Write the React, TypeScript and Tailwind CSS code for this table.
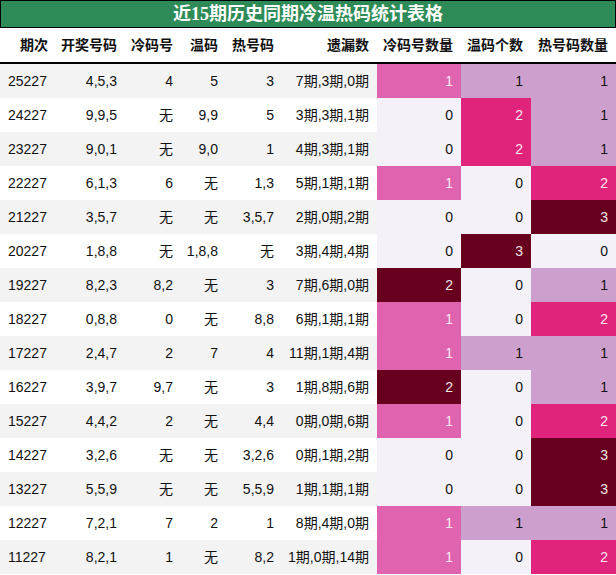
const rows: [string, string, string, string, string, string, number, number, number][] = [
  ['25227', '4,5,3', '4', '5', '3', '7期,3期,0期', 1, 1, 1],
  ['24227', '9,9,5', '无', '9,9', '5', '3期,3期,1期', 0, 2, 1],
  ['23227', '9,0,1', '无', '9,0', '1', '4期,3期,1期', 0, 2, 1],
  ['22227', '6,1,3', '6', '无', '1,3', '5期,1期,1期', 1, 0, 2],
  ['21227', '3,5,7', '无', '无', '3,5,7', '2期,0期,2期', 0, 0, 3],
  ['20227', '1,8,8', '无', '1,8,8', '无', '3期,4期,4期', 0, 3, 0],
  ['19227', '8,2,3', '8,2', '无', '3', '7期,6期,0期', 2, 0, 1],
  ['18227', '0,8,8', '0', '无', '8,8', '6期,1期,1期', 1, 0, 2],
  ['17227', '2,4,7', '2', '7', '4', '11期,1期,4期', 1, 1, 1],
  ['16227', '3,9,7', '9,7', '无', '3', '1期,8期,6期', 2, 0, 1],
  ['15227', '4,4,2', '2', '无', '4,4', '0期,0期,6期', 1, 0, 2],
  ['14227', '3,2,6', '无', '无', '3,2,6', '0期,1期,2期', 0, 0, 3],
  ['13227', '5,5,9', '无', '无', '5,5,9', '1期,1期,1期', 0, 0, 3],
  ['12227', '7,2,1', '7', '2', '1', '8期,4期,0期', 1, 1, 1],
  ['11227', '8,2,1', '1', '无', '8,2', '1期,0期,14期', 1, 0, 2],
]

// 冷码号数量 has max 2, the other two max 3
const coldColor = ['bg-[#f4f2f8] text-[#111]', 'bg-[#df63ae] text-[#fbeaf3]', 'bg-[#67001f] text-[#f3e6ea]']
const scaleColor = [
  'bg-[#f4f2f8] text-[#111]',
  'bg-[#cd9fcc] text-[#111]',
  'bg-[#e0237b] text-[#fbe6ef]',
  'bg-[#67001f] text-[#f3e6ea]',
]

const headers = ['期次', '开奖号码', '冷码号', '温码', '热号码', '遗漏数', '冷码号数量', '温码个数', '热号码数量']

export default function App() {
  return (
    <div
      className="w-[616px] h-[575px] bg-white overflow-hidden text-[14px] text-[#111]"
      style={{ fontFamily: '"Liberation Sans", "Noto Sans CJK SC", sans-serif' }}
    >
      <div
        className="h-[28px] border border-black bg-[#2e8b57] flex items-center justify-center text-white text-[18px] font-bold"
        style={{ fontFamily: '"Liberation Serif", "Noto Sans CJK SC", serif' }}
      >
        近15期历史同期冷温热码统计表格
      </div>
      <div className="grid grid-cols-[56px_69px_56px_45px_56px_95px_84px_70px_85px]">
        {headers.map((h) => (
          <div key={h} className="h-[36px] border-b-2 border-black flex items-center justify-end pr-2 font-bold">
            {h}
          </div>
        ))}
        {rows.map((r, i) => {
          const stripe = i % 2 === 0 ? 'bg-[#f3f3f3]' : 'bg-white'
          return (
            <div key={r[0]} className="contents">
              <div className={`h-[34px] flex items-center pl-2 ${stripe}`}>{r[0]}</div>
              {[r[1], r[2], r[3], r[4], r[5]].map((v, j) => (
                <div key={j} className={`h-[34px] flex items-center justify-end pr-2 ${stripe}`}>
                  {v}
                </div>
              ))}
              <div className={`h-[34px] flex items-center justify-end pr-2 ${coldColor[r[6]]}`}>{r[6]}</div>
              <div className={`h-[34px] flex items-center justify-end pr-2 ${scaleColor[r[7]]}`}>{r[7]}</div>
              <div className={`h-[34px] flex items-center justify-end pr-2 ${scaleColor[r[8]]}`}>{r[8]}</div>
            </div>
          )
        })}
      </div>
    </div>
  )
}
